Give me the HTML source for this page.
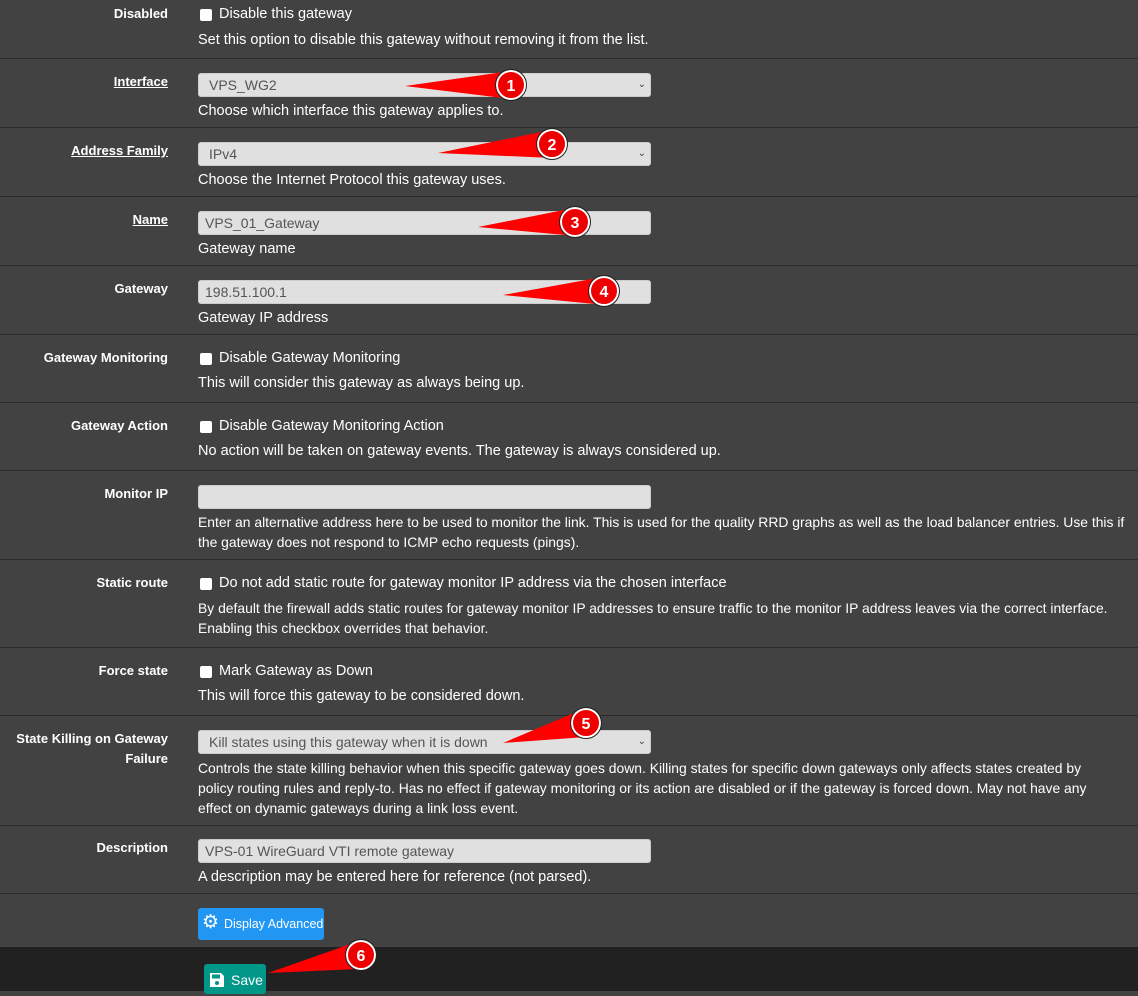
<!DOCTYPE html>
<html><head><meta charset="utf-8"><style>
body{margin:0;width:1138px;height:991px;background:#424242;font-family:"Liberation Sans",sans-serif;font-size:14.5px;color:#fff;position:relative;overflow:hidden}
.sep{position:absolute;left:0;width:1138px;height:1px;background:#2b2b2b}
.lbl{position:absolute;right:970px;font-weight:bold;text-align:right;white-space:nowrap;line-height:20px;font-size:13px}
.lbl.u{text-decoration:underline}
.t{position:absolute;left:198px;white-space:nowrap;line-height:20px}
.cb{position:absolute;left:200px;width:12px;height:12px;background:#fff;border-radius:2px}
.in{position:absolute;left:198px;width:441px;height:22px;background:#e0e0e0;border:1px solid #ccc;border-radius:3px;color:#555;padding-left:10px;line-height:22px;box-sizing:content-box;font-size:14px}
.chev{position:absolute;right:4px;top:0;color:#444;font-size:10px}
</style></head><body>
<div class="sep" style="top:58px"></div><div class="sep" style="top:127px"></div><div class="sep" style="top:196px"></div><div class="sep" style="top:265px"></div><div class="sep" style="top:334px"></div><div class="sep" style="top:402px"></div><div class="sep" style="top:470px"></div><div class="sep" style="top:559px"></div><div class="sep" style="top:647px"></div><div class="sep" style="top:715px"></div><div class="sep" style="top:825px"></div><div class="sep" style="top:893px"></div>
<div style="position:absolute;left:0;top:947px;width:1138px;height:44px;background:#212121"></div>

<div class="lbl" style="top:4px">Disabled</div><div class="cb" style="top:9px"></div><div class="t" style="left:219px;top:4px">Disable this gateway</div><div class="t" style="top:30px">Set this option to disable this gateway without removing it from the list.</div>

<div class="lbl u" style="top:72px">Interface</div><div class="in" style="top:73px">VPS_WG2<span class="chev">&#8964;</span></div><div class="t" style="top:101px">Choose which interface this gateway applies to.</div>

<div class="lbl u" style="top:141px">Address Family</div><div class="in" style="top:142px">IPv4<span class="chev">&#8964;</span></div><div class="t" style="top:170px">Choose the Internet Protocol this gateway uses.</div>

<div class="lbl u" style="top:210px">Name</div><div class="in" style="top:211px;padding-left:6px;width:445px">VPS_01_Gateway</div><div class="t" style="top:239px">Gateway name</div>

<div class="lbl" style="top:279px">Gateway</div><div class="in" style="top:280px;padding-left:6px;width:445px">198.51.100.1</div><div class="t" style="top:308px">Gateway IP address</div>

<div class="lbl" style="top:348px">Gateway Monitoring</div><div class="cb" style="top:353px"></div><div class="t" style="left:219px;top:348px">Disable Gateway Monitoring</div><div class="t" style="top:373px">This will consider this gateway as always being up.</div>

<div class="lbl" style="top:416px">Gateway Action</div><div class="cb" style="top:421px"></div><div class="t" style="left:219px;top:416px">Disable Gateway Monitoring Action</div><div class="t" style="top:441px">No action will be taken on gateway events. The gateway is always considered up.</div>

<div class="lbl" style="top:484px">Monitor IP</div><div class="in" style="top:485px"></div><div class="t" style="top:512px;font-size:13.9px">Enter an alternative address here to be used to monitor the link. This is used for the quality RRD graphs as well as the load balancer entries. Use this if<br>the gateway does not respond to ICMP echo requests (pings).</div>

<div class="lbl" style="top:573px">Static route</div><div class="cb" style="top:578px"></div><div class="t" style="left:219px;top:573px">Do not add static route for gateway monitor IP address via the chosen interface</div><div class="t" style="top:598px;font-size:13.9px">By default the firewall adds static routes for gateway monitor IP addresses to ensure traffic to the monitor IP address leaves via the correct interface.<br>Enabling this checkbox overrides that behavior.</div>

<div class="lbl" style="top:661px">Force state</div><div class="cb" style="top:666px"></div><div class="t" style="left:219px;top:661px">Mark Gateway as Down</div><div class="t" style="top:686px">This will force this gateway to be considered down.</div>

<div class="lbl" style="top:729px">State Killing on Gateway<br>Failure</div><div class="in" style="top:730px">Kill states using this gateway when it is down<span class="chev">&#8964;</span></div><div class="t" style="top:758px;font-size:13.9px">Controls the state killing behavior when this specific gateway goes down. Killing states for specific down gateways only affects states created by<br>policy routing rules and reply-to. Has no effect if gateway monitoring or its action are disabled or if the gateway is forced down. May not have any<br>effect on dynamic gateways during a link loss event.</div>

<div class="lbl" style="top:838px">Description</div><div class="in" style="top:839px;padding-left:6px;width:445px">VPS-01 WireGuard VTI remote gateway</div><div class="t" style="top:867px">A description may be entered here for reference (not parsed).</div>

<div style="position:absolute;left:198px;top:908px;width:126px;height:32px;background:#2196f3;border-radius:3px;font-size:12.5px;line-height:32px"><span style="position:absolute;left:4px;top:-1px;font-size:19px">&#9881;</span><span style="position:absolute;left:26px">Display Advanced</span></div>
<div style="position:absolute;left:204px;top:964px;width:62px;height:30px;background:#009688;border-radius:3px;line-height:32px;font-size:14px"><svg style="position:absolute;left:5px;top:8px" width="16" height="16" viewBox="0 0 16 16"><path d="M1 1h11l3 3v11H1z" fill="#fff"/><rect x="3" y="2.5" width="8" height="4" fill="#009688"/><circle cx="8" cy="11" r="2" fill="#009688"/></svg><span style="position:absolute;left:27px">Save</span></div>

<svg width="1138" height="991" style="position:absolute;left:0;top:0" font-family="Liberation Sans" font-weight="bold" font-size="16" text-anchor="middle">
<g fill="#f00">
<polygon points="405,86 511,71 511,99"/>
<polygon points="438,153 551,130 553,158"/>
<polygon points="478,227 574,208 576,236"/>
<polygon points="503,295 603,277 605,305"/>
<polygon points="503,743 582.7,709.3 589.3,736.7"/>
<polygon points="268,973 358.3,941.3 363.7,968.7"/>
</g>
<g fill="#e00" stroke="#fff" stroke-width="2">
<circle cx="511" cy="85" r="14"/><circle cx="552" cy="144" r="14"/><circle cx="575" cy="222" r="14"/><circle cx="604" cy="291" r="14"/><circle cx="586" cy="723" r="14"/><circle cx="361" cy="955" r="14"/>
</g>
<g fill="none" stroke="#222" stroke-width="1">
<circle cx="511" cy="85" r="15.5"/><circle cx="552" cy="144" r="15.5"/><circle cx="575" cy="222" r="15.5"/><circle cx="604" cy="291" r="15.5"/><circle cx="586" cy="723" r="15.5"/><circle cx="361" cy="955" r="15.5"/>
</g>
<g fill="#fff">
<text x="511" y="91">1</text><text x="552" y="150">2</text><text x="575" y="228">3</text><text x="604" y="297">4</text><text x="586" y="729">5</text><text x="361" y="961">6</text>
</g>
</svg>
</body></html>
